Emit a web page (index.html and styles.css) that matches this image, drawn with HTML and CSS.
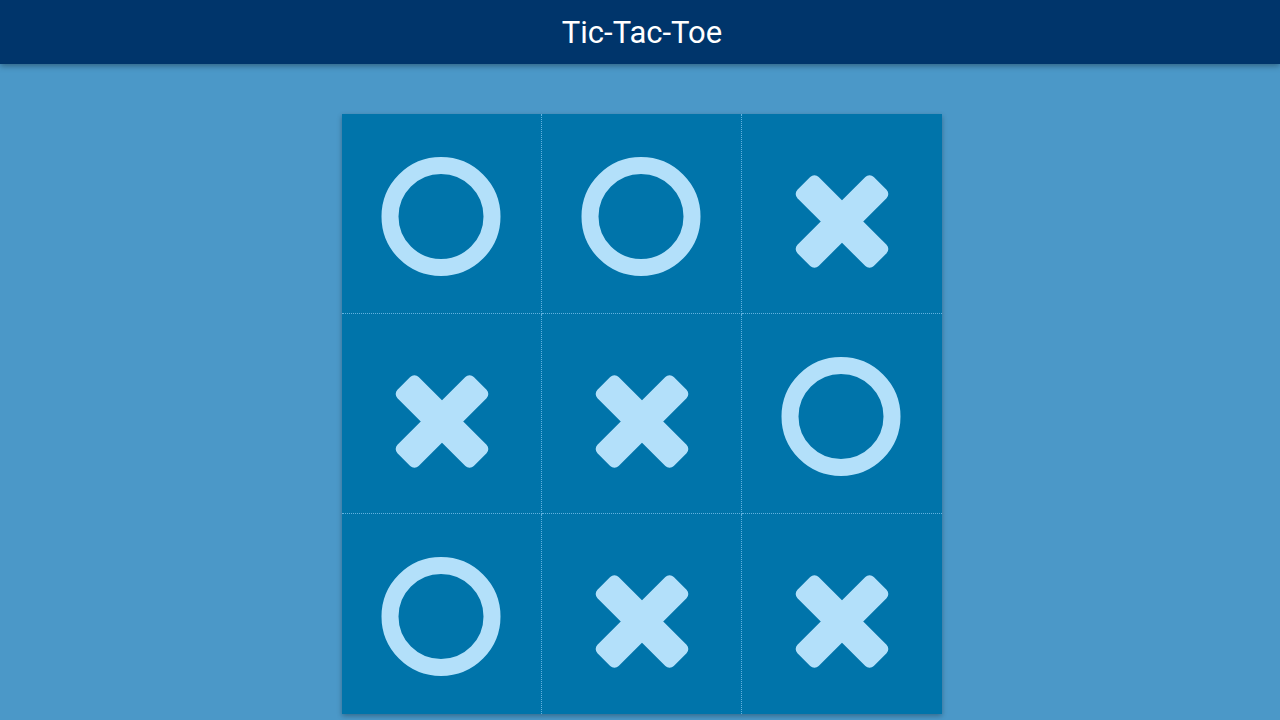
FILE: index.html
```html
<!DOCTYPE html>
<html lang="en">
<head>
<meta charset="utf-8">
<title>Tic-Tac-Toe</title>
<link rel="stylesheet" href="styles.css">
</head>
<body>
<header class="topbar"><h1 class="title">Tic-Tac-Toe</h1></header>
<main class="stage">
  <div class="board">
    <div class="cell"><svg class="mark" viewBox="0 0 200 200"><circle class="o" cx="99" cy="102.5" r="51"/></svg></div>
    <div class="cell"><svg class="mark" viewBox="0 0 200 200"><circle class="o" cx="99" cy="102.5" r="51"/></svg></div>
    <div class="cell"><svg class="mark" viewBox="0 0 200 200"><g class="x"><rect x="46" y="92.5" width="108" height="30" rx="6" transform="rotate(45 100 107.5)"/><rect x="46" y="92.5" width="108" height="30" rx="6" transform="rotate(-45 100 107.5)"/></g></svg></div>
    <div class="cell"><svg class="mark" viewBox="0 0 200 200"><g class="x"><rect x="46" y="92.5" width="108" height="30" rx="6" transform="rotate(45 100 107.5)"/><rect x="46" y="92.5" width="108" height="30" rx="6" transform="rotate(-45 100 107.5)"/></g></svg></div>
    <div class="cell"><svg class="mark" viewBox="0 0 200 200"><g class="x"><rect x="46" y="92.5" width="108" height="30" rx="6" transform="rotate(45 100 107.5)"/><rect x="46" y="92.5" width="108" height="30" rx="6" transform="rotate(-45 100 107.5)"/></g></svg></div>
    <div class="cell"><svg class="mark" viewBox="0 0 200 200"><circle class="o" cx="99" cy="102.5" r="51"/></svg></div>
    <div class="cell"><svg class="mark" viewBox="0 0 200 200"><circle class="o" cx="99" cy="102.5" r="51"/></svg></div>
    <div class="cell"><svg class="mark" viewBox="0 0 200 200"><g class="x"><rect x="46" y="92.5" width="108" height="30" rx="6" transform="rotate(45 100 107.5)"/><rect x="46" y="92.5" width="108" height="30" rx="6" transform="rotate(-45 100 107.5)"/></g></svg></div>
    <div class="cell"><svg class="mark" viewBox="0 0 200 200"><g class="x"><rect x="46" y="92.5" width="108" height="30" rx="6" transform="rotate(45 100 107.5)"/><rect x="46" y="92.5" width="108" height="30" rx="6" transform="rotate(-45 100 107.5)"/></g></svg></div>
  </div>
</main>
</body>
</html>
```
FILE: styles.css
```css
* { box-sizing: border-box; }
html, body { margin: 0; padding: 0; }
body {
  background: #4b98c8;
  font-family: Roboto, "Liberation Sans", sans-serif;
  height: 720px;
  overflow: hidden;
}
.topbar {
  height: 64px;
  padding-left: 4px;
  background: #00356b;
  display: flex;
  align-items: center;
  justify-content: center;
  box-shadow: 0 2px 6px rgba(0, 0, 0, 0.35);
  position: relative;
  z-index: 1;
}
.title {
  margin: 0;
  color: #ffffff;
  font-size: 31px;
  font-weight: 400;
  line-height: 1;
}
.stage {
  display: flex;
  justify-content: center;
  padding-top: 50px;
  padding-left: 4px;
}
.board {
  width: 600px;
  height: 600px;
  background: #0074aa;
  display: grid;
  grid-template-columns: repeat(3, 200px);
  grid-template-rows: repeat(3, 200px);
  box-shadow: 0 2px 5px rgba(0, 0, 0, 0.3);
}
.cell {
  border-right: 1px dotted #62b2df;
  border-bottom: 1px dotted #62b2df;
  display: flex;
  align-items: center;
  justify-content: center;
}
.cell:nth-child(3n) { border-right: none; }
.cell:nth-child(n+7) { border-bottom: none; }
.mark { width: 200px; height: 200px; display: block; flex: none; }
.o { fill: none; stroke: #b3e0fa; stroke-width: 17; }
.x rect { fill: #b3e0fa; }
```
